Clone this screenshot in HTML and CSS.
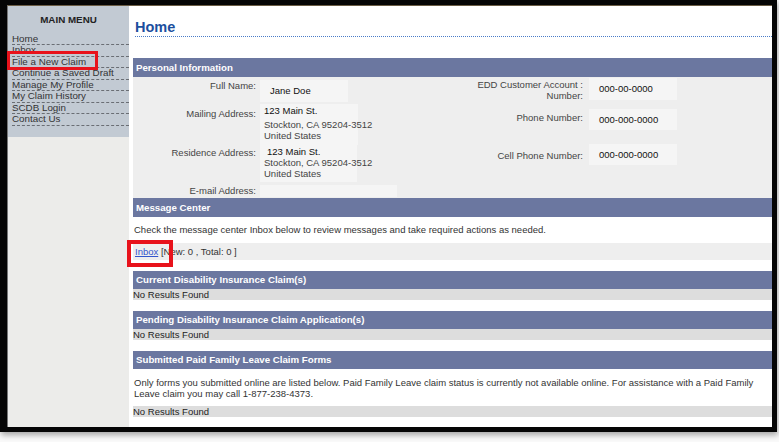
FILE: index.html
```html
<!DOCTYPE html>
<html>
<head>
<meta charset="utf-8">
<link rel="stylesheet" href="styles.css">
</head>
<body>
<div class="frame">
  <div class="inner">
    <aside class="sidebar">
      <div class="menu-box">
        <div class="menu-title">MAIN MENU</div>
        <ul class="menu">
          <li>Home</li>
          <li>Inbox</li>
          <li>File a New Claim</li>
          <li>Continue a Saved Draft</li>
          <li>Manage My Profile</li>
          <li>My Claim History</li>
          <li>SCDB Login</li>
          <li>Contact Us</li>
        </ul>
      </div>
    </aside>
    <main class="main">
      <h1 class="title">Home</h1>

      <div class="bar bar-personal">Personal Information</div>
      <div class="pinfo">
        <div class="lbl r1">Full Name:</div>
        <div class="val-wrap r1v"><span class="val v-name">Jane Doe</span></div>
        <div class="lbl rl1">EDD Customer Account :<br>Number:</div>
        <div class="val-wrap rv1"><span class="val v-right">000-00-0000</span></div>

        <div class="lbl r2">Mailing Address:</div>
        <div class="val-wrap r2v"><span class="val v-addr"><span class="l1">123 Main St.</span><span class="l2">Stockton, CA 95204-3512</span><span class="l3">United States</span></span></div>
        <div class="lbl rl2">Phone Number:</div>
        <div class="val-wrap rv2"><span class="val v-right">000-000-0000</span></div>

        <div class="lbl r3">Residence Address:</div>
        <div class="val-wrap r3v"><span class="val v-addr2"><span class="l1">123 Main St.</span><span class="l2">Stockton, CA 95204-3512</span><span class="l3">United States</span></span></div>
        <div class="lbl rl3">Cell Phone Number:</div>
        <div class="val-wrap rv3"><span class="val v-right">000-000-0000</span></div>

        <div class="lbl r4">E-mail Address:</div>
        <div class="val-wrap r4v"><span class="val v-email"></span></div>
        <div></div>
        <div></div>
      </div>

      <div class="bar bar-msg">Message Center</div>
      <p class="msg-text">Check the message center Inbox below to review messages and take required actions as needed.</p>
      <div class="inbox-row"><a class="inbox-link" href="#">Inbox</a> [New: 0 , Total: 0 ]</div>

      <div class="bar bar-sec">Current Disability Insurance Claim(s)</div>
      <div class="nores">No Results Found</div>

      <div class="bar bar-sec">Pending Disability Insurance Claim Application(s)</div>
      <div class="nores">No Results Found</div>

      <div class="bar bar-sec">Submitted Paid Family Leave Claim Forms</div>
      <p class="pfl-text">Only forms you submitted online are listed below. Paid Family Leave claim status is currently not available online. For assistance with a Paid Family<br>Leave claim you may call 1-877-238-4373.</p>
      <div class="nores">No Results Found</div>
    </main>
  </div>
  <div class="hl hl-menu"></div>
  <div class="hl hl-inbox"></div>
</div>
</body>
</html>
```

FILE: styles.css
```css
* { box-sizing: border-box; }
html, body { margin: 0; padding: 0; }
body {
  width: 779px;
  height: 442px;
  background: #fafafa;
  font-family: "Liberation Sans", Arial, sans-serif;
  font-size: 9.5px;
  color: #333;
  overflow: hidden;
}
.frame {
  position: relative;
  width: 777px;
  height: 432px;
  border-style: solid;
  border-color: #050505;
  border-width: 5px 5px 5px 7px;
  box-shadow: 1px 3px 6px rgba(0,0,0,0.35);
}
.inner {
  display: flex;
  height: 100%;
  overflow: hidden;
  border-top: 1px solid #6a5c44;
  border-left: 1px solid #777;
}
.sidebar {
  width: 121px;
  flex: none;
  background: #ececea;
}
.menu-box {
  background: #c2cad3;
  height: 131px;
  padding: 8px 0 0 4px;
}
.menu-title {
  font-weight: bold;
  font-size: 9.8px;
  text-align: center;
  color: #222;
  line-height: 12px;
  padding-right: 4px;
  margin-bottom: 8px;
}
.menu {
  list-style: none;
  margin: 0;
  padding: 0;
}
.menu li {
  height: 11.45px;
  line-height: 10.4px;
  border-bottom: 1px dashed #6a6e74;
  color: #333;
  font-size: 9.8px;
  white-space: nowrap;
}
.main {
  flex: 1;
  min-width: 0;
  background: #fff;
  padding-left: 4px;
}
.title {
  margin: 12px 0 21px 2px;
  font-size: 14.5px;
  line-height: 18px;
  font-weight: bold;
  color: #1c4f9e;
  border-bottom: 1px dotted #4a7cc8;
}
.bar {
  background: #6b77a0;
  color: #fff;
  font-weight: bold;
  font-size: 9.7px;
  padding-left: 3px;
  height: 18px;
  line-height: 18px;
}
.bar-personal, .bar-msg { height: 19px; line-height: 19px; }
.pinfo {
  background: #eeeeee;
  height: 121px;
  display: grid;
  grid-template-columns: 125px 182px 147px 1fr;
  grid-template-rows: 26px 39px 38px 18px;
}
.lbl {
  text-align: right;
  color: #444;
  line-height: 11px;
  padding-right: 2px;
  white-space: nowrap;
}
.val-wrap { padding-left: 2px; }
.val {
  display: block;
  background: #f5f5f5;
  color: #111;
  white-space: nowrap;
}
.r1 { padding-top: 2.5px; }
.r1v { padding-top: 3px; }
.v-name { width: 88px; height: 22px; line-height: 22px; padding-left: 10px; }
.rl1 { padding-top: 2px; padding-right: 4px; line-height: 11px; }
.rv1 { padding-top: 1px; }
.v-right { width: 88px; height: 22px; line-height: 22px; padding-left: 10px; }

.r2 { padding-top: 4.5px; }
.r2v { padding-top: 1px; }
.v-addr { width: 98px; padding: 1px 0 4px 4px; }
.v-addr .l1, .v-addr2 .l1 { display: block; line-height: 12px; }
.v-addr .l2, .v-addr .l3, .v-addr2 .l2, .v-addr2 .l3 { display: block; line-height: 11px; color: #444; }
.v-addr .l2 { padding-top: 2px; }
.rl2 { padding-top: 8.5px; padding-right: 4px; }
.rv2 { padding-top: 6px; }
.rv2 .v-right { height: 21px; line-height: 21px; }

.r3 { padding-top: 4.5px; }
.r3v { padding-top: 1px; }
.v-addr2 { width: 97px; padding: 3px 0 3px 4px; }
.v-addr2 .l1 { padding-left: 3px; line-height: 11px; }
.rl3 { padding-top: 7.5px; padding-right: 4px; }
.rv3 { padding-top: 2px; }
.rv3 .v-right { height: 21px; line-height: 21px; }

.r4 { padding-top: 4.5px; }
.r4v { padding-top: 5px; }
.v-email { width: 137px; height: 12px; }

.msg-text {
  margin: 0;
  padding: 7px 0 7px 1px;
  line-height: 12px;
  color: #333;
}
.inbox-row {
  background: #eeeeee;
  height: 17px;
  line-height: 17px;
  padding-left: 2px;
  margin-bottom: 11px;
}
.inbox-link { color: #3355cc; text-decoration: underline; }
.nores {
  background: #dddddd;
  height: 11px;
  line-height: 11px;
  color: #222;
  margin-bottom: 11px;
}
.pfl-text {
  margin: 0;
  padding: 8px 0 7px 1px;
  line-height: 11px;
  color: #333;
  white-space: nowrap;
}
.hl {
  position: absolute;
  border: 4px solid #e8121b;
}
.hl-menu { left: 0px; top: 46px; width: 91px; height: 19px; border-width: 3px; }
.hl-inbox { left: 120px; top: 235px; width: 46px; height: 27px; }
```
